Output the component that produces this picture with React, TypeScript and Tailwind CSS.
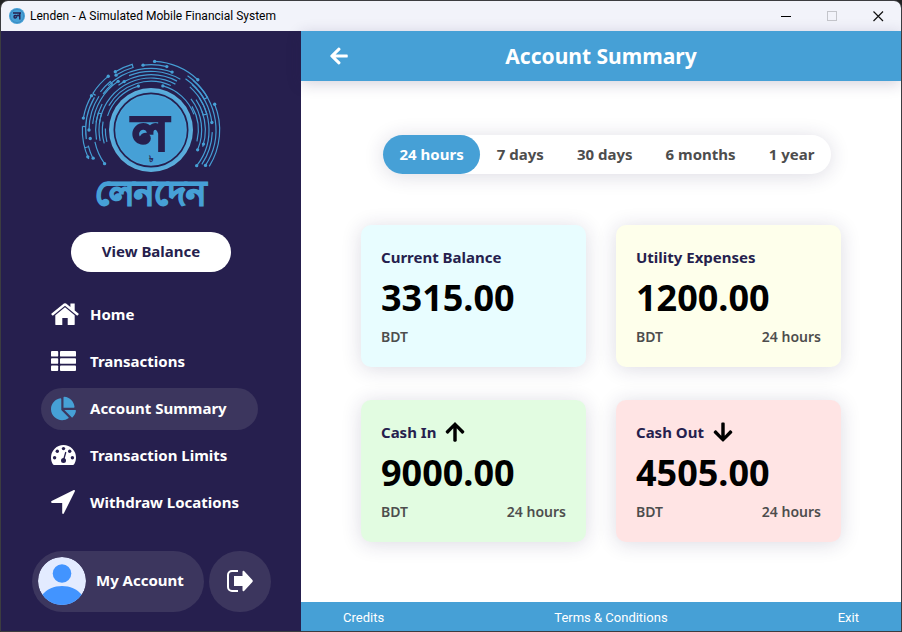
import type { ComponentType, ReactNode } from "react";
import { FaChartPie, FaArrowLeft, FaArrowUp, FaArrowDown } from "react-icons/fa";

const CX = 243;
const CY = 240;

function point(r: number, deg: number) {
  const a = (deg * Math.PI) / 180;
  return `${(CX + r * Math.cos(a)).toFixed(1)} ${(CY + r * Math.sin(a)).toFixed(1)}`;
}

function arc(r: number, from: number, to: number) {
  return `M${point(r, from)}A${r} ${r} 0 ${to - from > 180 ? 1 : 0} 1 ${point(r, to)}`;
}

function loop(r1: number, r2: number, from: number, to: number) {
  return `M${point(r1, from)}A${r1} ${r1} 0 0 1 ${point(r1, to)}L${point(r2, to)}A${r2} ${r2} 0 0 0 ${point(r2, from)}`;
}

// Circuit tracks around the coin: radius, start angle, end angle.
const tracks: [number, number, number][] = [
  [206, -87, -47], [196, -97, -76], [206, -148, -128], [206, -170, -150],
  [206, 155, 183], [194, 154, 166], [196, 172, 210], [185, -134, -70],
  [176, -174, -124], [176, -112, -60], [166, -126, -62], [186, 180, 213],
  [172, 144, 168], [156, -166, -62], [146, -150, -66], [137, -162, -106],
  [137, -75, -20], [166, 170, 208], [156, 168, 192], [146, 164, 190], [137, 165, 182],
  [206, -22, 32], [195, -50, 33], [184, -48, -7], [184, 2, 34],
  [174, -48, 37], [163, -20, 18], [152, -38, 23], [142, -30, 14],
];

const nodes: [number, number][] = [
  [206, -87], [206, -47], [196, -97], [196, -76], [206, -128.5], [206, -170],
  [206, -150], [205, -121.5], [195, -122.5], [206, 157], [193, 154], [186, 180],
  [184, 172], [172, 144], [185, -70], [176, -124], [166, -119], [137, -106],
  [137, -75], [206, -22], [195, 33], [184, -7], [174, 38], [152, 23], [163, 15],
];

function Logo() {
  return (
    <svg viewBox="0 0 486 510" className="h-[170px] w-[162px]" role="img" aria-label="লেনদেন">
      <defs>
        <radialGradient id="coin" cx="50%" cy="50%" r="50%">
          <stop offset="80%" stopColor="#46a0d6" />
          <stop offset="100%" stopColor="#5fb0dd" />
        </radialGradient>
      </defs>
      <g fill="none" stroke="#459dd3" strokeWidth="3.6">
        {tracks.map(([r, a, b]) => (
          <path key={`${r}/${a}`} d={arc(r, a, b)} />
        ))}
        <path d={loop(205, 195, -121.5, -106)} />
        <path d={loop(190, 180, -143, -130)} />
        <path d={loop(196, 185, -56, -30)} />
        <path d={loop(166, 156, -172, -162)} />
        <path d={loop(163, 174, -34, -16)} />
        <path d={`M${point(206, 183)}L${point(196, 183)}M${point(206, 165)}L${point(194, 165)}M${point(206, -148)}L${point(196, -148)}`} />
      </g>
      <g fill="#46a0d6">
        {nodes.map(([r, a]) => {
          const [x, y] = point(r, a).split(" ");
          return <circle key={`${r}/${a}`} cx={x} cy={y} r="5" />;
        })}
      </g>
      <circle cx={CX} cy={CY} r="126" fill="url(#coin)" />
      <circle cx={CX} cy={CY} r="110" fill="none" stroke="#261f4e" strokeWidth="5" />
      <g fontFamily="'Noto Sans', sans-serif" fontWeight="700" textAnchor="middle">
        <text x="240" y="299" fontSize="148" fill="#261f4e" stroke="#261f4e" strokeWidth="8">ল</text>
        <text x="243" y="336" fontSize="26" fill="#261f4e">৳</text>
        <text x="240" y="464" fontSize="103" fill="#46a0d6" stroke="#46a0d6" strokeWidth="5">লেনদেন</text>
      </g>
    </svg>
  );
}

function AppIcon() {
  return (
    <svg viewBox="0 0 16 16" className="size-4" aria-hidden="true">
      <circle cx="8" cy="8" r="8" fill="#46a0d6" />
      <circle cx="8" cy="8" r="6.6" fill="none" stroke="#3a83b8" strokeWidth="0.7" />
      <path d="M4 5h8M10.8 5v6.5M10.5 8.4C9.6 6.8 8 7 7.8 8.6M7.8 8.6C7.2 7 5 7.2 5 8.8S7 10.4 7.6 9" fill="none" stroke="#261f4e" strokeWidth="1.4" />
    </svg>
  );
}

function Avatar() {
  return (
    <svg viewBox="0 0 48 48" className="size-12 rounded-full" aria-hidden="true">
      <circle cx="24" cy="24" r="24" fill="#e3ebff" />
      <circle cx="24" cy="16.5" r="9.3" fill="#4294ff" />
      <path d="M4 38C9 32 16 29 24 29s15 3 20 9a24 24 0 0 1-40 0Z" fill="#4294ff" />
    </svg>
  );
}

function LogoutIcon() {
  return (
    <svg viewBox="0 0 26 22" className="h-[22px] w-[26px]" aria-hidden="true">
      <path d="M11 1H5a4 4 0 0 0-4 4v12a4 4 0 0 0 4 4h6" fill="none" stroke="#fff" strokeWidth="2" />
      <path d="M7 6h8.500V1.700c0-1 .9-1.400 1.600-.7l8.300 9.100c.5.500.5 1.300 0 1.800l-8.300 9.100c-.7.700-1.600.3-1.600-.7V16H7Z" fill="#fff" />
    </svg>
  );
}

function HomeIcon() {
  return (
    <svg viewBox="0 0 28 22" className="h-[22px] w-7" fill="currentColor" aria-hidden="true">
      <path d="M14 4.300 4.300 12.200V21.500c0 .3.200.5.500.5H11.300V15h5.400v7h6.500c.3 0 .5-.2.500-.5V12.200Z" />
      <path d="M12.900.6a1.700 1.700 0 0 1 2.200 0L19.400 4V.6h4.300v6.900l3.700 3c.4.300.4.700.1 1l-.6.800c-.3.300-.7.300-1 .1L14 2.700 2.100 12.400c-.3.200-.7.200-1-.1l-.6-.8c-.3-.3-.3-.7.100-1Z" />
    </svg>
  );
}

function ListIcon() {
  return (
    <svg viewBox="0 0 25 20" className="h-5 w-[25px]" fill="currentColor" aria-hidden="true">
      {[0, 7.2, 14.4].map((y) => (
        <g key={y}>
          <rect x="0" y={y} width="7.2" height="5.6" rx="0.9" />
          <rect x="9" y={y} width="16" height="5.6" rx="0.9" />
        </g>
      ))}
    </svg>
  );
}

function PieIcon() {
  return <FaChartPie className="size-[25px] text-[#46a0d6]" />;
}

function GaugeIcon() {
  return (
    <svg viewBox="0 0 25 20" className="h-5 w-[25px]" aria-hidden="true">
      <path d="M12.500 0A12.500 12.500 0 0 0 0 12.500c0 2.400.6 4.600 1.700 6.600.3.600.9.900 1.500.9h18.600c.6 0 1.200-.3 1.500-.9 1.100-2 1.700-4.200 1.700-6.600A12.500 12.500 0 0 0 12.500 0Z" fill="currentColor" />
      <g fill="#261f4e">
        <circle cx="3.6" cy="12.700" r="1.700" />
        <circle cx="6.300" cy="6.200" r="1.700" />
        <circle cx="12.500" cy="3.600" r="1.700" />
        <circle cx="18.700" cy="6.200" r="1.700" />
        <circle cx="21.400" cy="12.700" r="1.700" />
        <circle cx="12.500" cy="15.500" r="2.500" />
      </g>
      <path d="M12.700 14.500 14.700 7.500" stroke="#261f4e" strokeWidth="1.300" strokeLinecap="round" />
    </svg>
  );
}

function LocateIcon() {
  return (
    <svg viewBox="0 0 24 24" className="size-6" fill="currentColor" aria-hidden="true">
      <path d="M22.800.1c.8-.3 1.400.3 1.100 1.100L12.900 23.300c-.4 1-1.700.7-1.700-.3V12.900H1C0 12.900-.3 11.600.6 11.100Z" />
    </svg>
  );
}

const navItems: { label: string; Icon: ComponentType; active?: boolean }[] = [
  { label: "Home", Icon: HomeIcon },
  { label: "Transactions", Icon: ListIcon },
  { label: "Account Summary", Icon: PieIcon, active: true },
  { label: "Transaction Limits", Icon: GaugeIcon },
  { label: "Withdraw Locations", Icon: LocateIcon },
];

const periods = ["24 hours", "7 days", "30 days", "6 months", "1 year"];

function Card({ title, value, period, tint, icon }: { title: string; value: string; period?: string; tint: string; icon?: ReactNode }) {
  return (
    <section className={`rounded-[10px] p-5 shadow-[0_2px_20px_rgba(38,31,78,0.16)] ${tint}`}>
      <h2 className="flex items-center gap-2 text-[15px] leading-6 font-bold text-[#261f4e]">
        {title}
        {icon}
      </h2>
      <p className="mt-1 text-4xl leading-[50px] font-bold text-black">{value}</p>
      <div className="mt-1 flex justify-between text-sm leading-5 font-semibold text-[#4d4d4d]">
        <span>BDT</span>
        {period && <span>{period}</span>}
      </div>
    </section>
  );
}

export default function App() {
  return (
    <div className="min-h-screen bg-[#222] font-['Noto_Sans','Open_Sans',sans-serif]">
      <div className="flex min-h-screen flex-col overflow-hidden rounded-t-lg border border-[#3c3c40]">
        <div className="flex h-[30px] items-center bg-[#f2f3fa] pl-2">
          <AppIcon />
          <span className="flex-1 pl-[5px] font-['Roboto','Open_Sans',sans-serif] text-xs text-black">Lenden - A Simulated Mobile Financial System</span>
          <button aria-label="Minimize" className="flex h-full w-[46px] items-center justify-center">
            <svg viewBox="0 0 11 11" className="size-[11px]"><path d="M0 5.5h10" stroke="#000" /></svg>
          </button>
          <button aria-label="Maximize" disabled className="flex h-full w-[46px] items-center justify-center">
            <svg viewBox="0 0 11 11" className="size-[11px]"><rect x=".5" y=".5" width="9" height="9" fill="none" stroke="#c4c5cb" /></svg>
          </button>
          <button aria-label="Close" className="flex h-full w-[46px] items-center justify-center">
            <svg viewBox="0 0 11 11" className="size-[11px]"><path d="M.5.5l9.500 9.500M10 .5.5 10" stroke="#111" strokeWidth="1.2" /></svg>
          </button>
        </div>

        <div className="flex flex-1">
          <aside className="flex w-[300px] shrink-0 flex-col items-center bg-[#261f4e] pt-[19px] pb-[19px] text-[15px] font-bold text-white">
            <Logo />
            <button className="mt-3 h-10 w-40 rounded-full bg-white pb-0.5 text-[#261f4e]">View Balance</button>
            <nav className="mt-[22px] flex w-full flex-col gap-[5px] pr-[43px] pl-10">
              {navItems.map(({ label, Icon, active }) => (
                <a key={label} href="#" className={`flex h-[42px] items-center gap-[11px] rounded-full px-[10px] pb-0.5 ${active ? "bg-[#3c365e]" : ""}`}>
                  <span className="w-7">
                    <Icon />
                  </span>
                  {label}
                </a>
              ))}
            </nav>
            <div className="mt-auto flex w-full gap-[5px] pl-[31px]">
              <button className="flex h-[61px] w-[172px] items-center gap-[10px] rounded-full bg-[#3c365e] pb-0.5 pl-[6px]">
                <Avatar />
                My Account
              </button>
              <button aria-label="Log out" className="flex h-[61px] w-[62px] items-center justify-center rounded-full bg-[#3c365e] pb-0.5">
                <LogoutIcon />
              </button>
            </div>
          </aside>

          <div className="flex min-w-0 flex-1 flex-col bg-white">
            <header className="grid h-[50px] grid-cols-[1fr_auto_1fr] items-center bg-[#46a0d6] px-7 text-white shadow-[0_3px_14px_rgba(38,31,78,0.2)]">
              <button aria-label="Back" className="justify-self-start">
                <FaArrowLeft className="size-5" />
              </button>
              <h1 className="text-[21px] leading-7 font-bold">Account Summary</h1>
            </header>

            <main className="flex flex-1 flex-col items-center pt-[54px]">
              <div className="pl-3">
                <div className="flex w-[448px] rounded-full bg-white shadow-[0_2px_20px_rgba(38,31,78,0.16)]">
                  {periods.map((p, i) => (
                    <button key={p} className={`h-[39px] flex-auto rounded-full px-4 text-[15px] font-bold ${i === 0 ? "bg-[#46a0d6] text-white" : "text-[#4d4d4d]"}`}>
                      {p}
                    </button>
                  ))}
                </div>
              </div>
              <div className="mt-[51px] grid grid-cols-[225px_225px] gap-x-[30px] gap-y-[33px]">
                <Card title="Current Balance" value="3315.00" tint="bg-[#e8fdff]" />
                <Card title="Utility Expenses" value="1200.00" period="24 hours" tint="bg-[#feffeb]" />
                <Card title="Cash In" value="9000.00" period="24 hours" tint="bg-[#e2fce1]" icon={<FaArrowUp className="size-[22px] text-black" />} />
                <Card title="Cash Out" value="4505.00" period="24 hours" tint="bg-[#ffe4e4]" icon={<FaArrowDown className="size-[22px] text-black" />} />
              </div>
            </main>

            <footer className="flex h-[29px] items-center justify-between bg-[#46a0d6] px-[42px] pt-0.5 font-['Roboto','Open_Sans',sans-serif] text-[13px] text-white">
              <a href="#">Credits</a>
              <a href="#">Terms &amp; Conditions</a>
              <a href="#">Exit</a>
            </footer>
          </div>
        </div>
      </div>
    </div>
  );
}
